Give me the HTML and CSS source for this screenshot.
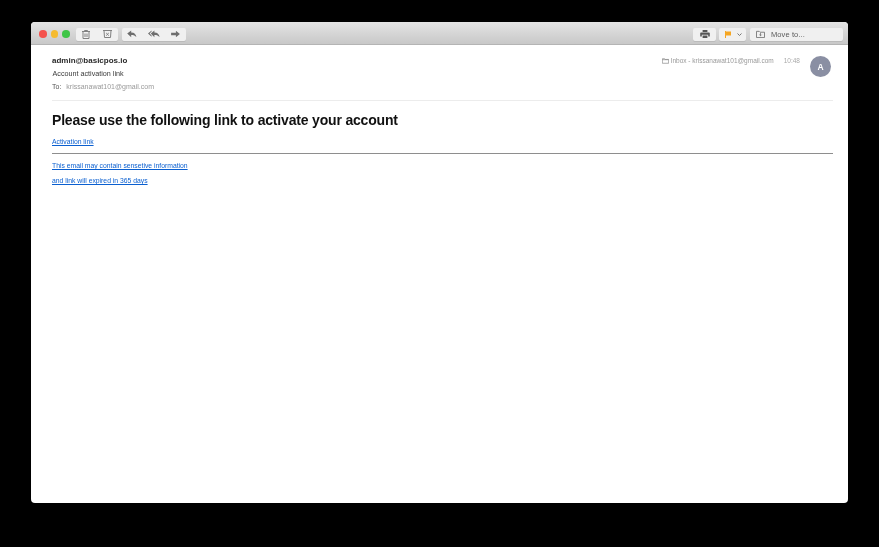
FILE: index.html
```html
<!DOCTYPE html>
<html lang="en">
<head>
<meta charset="utf-8">
<title>Account activation link</title>
<link rel="stylesheet" href="styles.css">
</head>
<body>
<div class="window">
  <div class="toolbar">
    <div class="lights"><span class="light red"></span><span class="light yellow"></span><span class="light green"></span></div>
    <div class="group trash-group">
      <span class="btn w21"><svg width="8" height="9" viewBox="0 0 8 9" fill="none" stroke="#808080" stroke-width="1"><path d="M0 1.500h8M2.500 1.500V.5h3v1M1 1.500v7h6v-7M3 3.500v3.500M5 3.500v3.500"/></svg></span>
      <span class="btn w21"><svg width="9" height="8" viewBox="0 0 9 8" fill="none" stroke="#808080" stroke-width="1"><path d="M0 .5h9M1 .5l.5 7h6l.5-7M3.200 3l2.600 2.600M5.800 3 3.200 5.600"/></svg></span>
    </div>
    <div class="group reply-group">
      <span class="btn w21"><svg width="10" height="8" viewBox="0 0 12 10" fill="#6e6e6e"><path d="M0 4.500 5 .5v2.500c4 0 6 2 6.500 6-1.500-2-3.500-2.700-6.500-2.700V9z"/></svg></span>
      <span class="btn w22"><svg width="12" height="8" viewBox="0 0 15 10" fill="#6e6e6e"><path d="M0 4.500 4.500.5v1.400L2 4.500 4.500 7v1.500zM3.500 4.500 8 .5V3c4 0 6 2 6.500 6-1.500-2-3.500-2.700-6.500-2.700V9z"/></svg></span>
      <span class="btn w21"><svg width="9" height="8" viewBox="0 0 11 10" fill="#6e6e6e"><path d="M11 5 6 .8v2.700H0v3h6v2.700z"/></svg></span>
    </div>
    <div class="spacer"></div>
    <div class="group print-group">
      <span class="btn w23"><svg width="10" height="8" viewBox="0 0 12 10" fill="#555"><path d="M3 0h6v2.500H3zM1 3h10a1 1 0 0 1 1 1v4h-2V6H2v2H0V4a1 1 0 0 1 1-1zM3 7h6v3H3z"/></svg></span>
    </div>
    <div class="group flag-group">
      <span class="btn flag-btn"><svg width="6" height="7" viewBox="0 0 6 7" fill="#f5a623"><path d="M0 0h1v7H0zM1 .5h5v4H1z"/></svg><svg width="5" height="3" viewBox="0 0 5 3" fill="none" stroke="#777" stroke-width="1"><path d="M.5.500 2.500 2.500 4.500.5"/></svg></span>
    </div>
    <div class="group move-group">
      <span class="btn move-btn"><svg width="9" height="8" viewBox="0 0 10 9" fill="none" stroke="#777" stroke-width="1"><path d="M.5 1.500h3l1 1h5v6h-9zM5 3.500v3M3.800 5.300 5 6.500l1.200-1.200"/></svg><span class="move-label">Move to...</span></span>
    </div>
  </div>
  <div class="message">
    <header class="msg-header">
      <div class="msg-meta">
        <div class="sender">admin@basicpos.io</div>
        <div class="subject">Account activation link</div>
        <div class="to"><span class="to-label">To:</span><span>krissanawat101@gmail.com</span></div>
      </div>
      <div class="mailbox">
        <svg width="7" height="6" viewBox="0 0 8 6" fill="none" stroke="#888" stroke-width=".8"><path d="M.4.400h2.600l.6.800h4v4.400H.4zM.4 1.500h7.200"/></svg>
        <span>Inbox - krissanawat101@gmail.com</span>
      </div>
      <div class="time">10:48</div>
      <div class="avatar">A</div>
    </header>
    <main class="body">
      <h1>Please use the following link to activate your account</h1>
      <p class="first"><a href="#">Activation link</a></p>
      <hr>
      <p class="note"><a href="#">This email may contain sensetive information</a></p>
      <p class="note second"><a href="#">and link will expired in 365 days</a></p>
    </main>
  </div>
</div>
</body>
</html>
```
FILE: styles.css
```css
* { box-sizing: border-box; }
html, body { margin: 0; height: 100%; }
body {
  background: #000;
  padding: 22px 31px 44px;
  font-family: "Liberation Sans", Arial, sans-serif;
  overflow: hidden;
}
.window {
  height: 481px;
  background: #fff;
  border-radius: 4px;
  overflow: hidden;
  display: flex;
  flex-direction: column;
}
.toolbar {
  height: 23px;
  flex: none;
  display: flex;
  align-items: flex-start;
  padding: 5.500px 5px 0 8px;
  background: linear-gradient(#e4e4e4, #c8c8c8);
  border-bottom: 1px solid #b4b4b4;
}
.lights { display: flex; gap: 4px; margin-top: 2.500px; }
.light { width: 7.500px; height: 7.500px; border-radius: 50%; }
.red { background: #f4524c; }
.yellow { background: #f5bb30; }
.green { background: #3ec546; }
.group {
  display: flex;
  height: 13px;
  border-radius: 2px;
  overflow: hidden;
  background: #f0f0f0;
  box-shadow: 0 1px 0 #bbb;
  will-change: opacity;
}
.btn { display: flex; align-items: center; justify-content: center; height: 100%; }
.w21 { width: 21px; }
.w22 { width: 22px; }
.w23 { width: 23px; }
.trash-group { margin-left: 6px; }
.reply-group { margin-left: 4px; }
.spacer { flex: 1; }
.flag-group { margin-left: 3px; }
.flag-btn { width: 27px; justify-content: flex-start; padding-left: 6px; gap: 6px; }
.move-group { margin-left: 4px; }
.move-btn { width: 93px; justify-content: flex-start; padding-left: 6px; gap: 6px; }
.move-label { font-size: 7.500px; color: #5a5a5a; letter-spacing: .1px; }
.message { flex: 1; padding: 0 15px 0 21px; will-change: opacity; }
.msg-header {
  height: 56px;
  display: flex;
  align-items: flex-start;
  border-bottom: 1px solid #ececec;
}
.msg-meta { flex: 1; padding-top: 10.500px; }
.sender { font-size: 8px; font-weight: 700; color: #2a2a2a; line-height: 10px; }
.subject { font-size: 7.200px; color: #3a3a3a; line-height: 10px; margin-top: 3px; padding-left: .5px; }
.to { font-size: 7px; color: #999; line-height: 10px; margin-top: 3px; display: flex; gap: 5px; }
.to-label { color: #555; }
.mailbox { display: flex; align-items: center; gap: 2px; font-size: 6.500px; color: #999; margin-top: 11px; line-height: 9px; }
.time { font-size: 6.500px; color: #aaa; margin: 11px 0 0 10px; line-height: 9px; }
.avatar {
  width: 21px;
  height: 21px;
  border-radius: 50%;
  background: #8a8fa3;
  color: #fff;
  font-size: 8.500px;
  font-weight: 700;
  display: flex;
  align-items: center;
  justify-content: center;
  margin: 11px 2px 0 10px;
}
h1 { font-size: 14px; letter-spacing: -.18px; line-height: 18px; margin: 10px 0 0; color: #111; font-weight: 700; }
p { margin: 0; font-size: 6.800px; line-height: 9px; }
a { color: #0a5fd0; text-decoration: underline; }
.first { margin-top: 8px; }
hr { border: 0; border-top: 1px solid #8e8e8e; margin: 7px 0 0; }
.note { margin-top: 7px; }
.note.second { margin-top: 6px; }
```
